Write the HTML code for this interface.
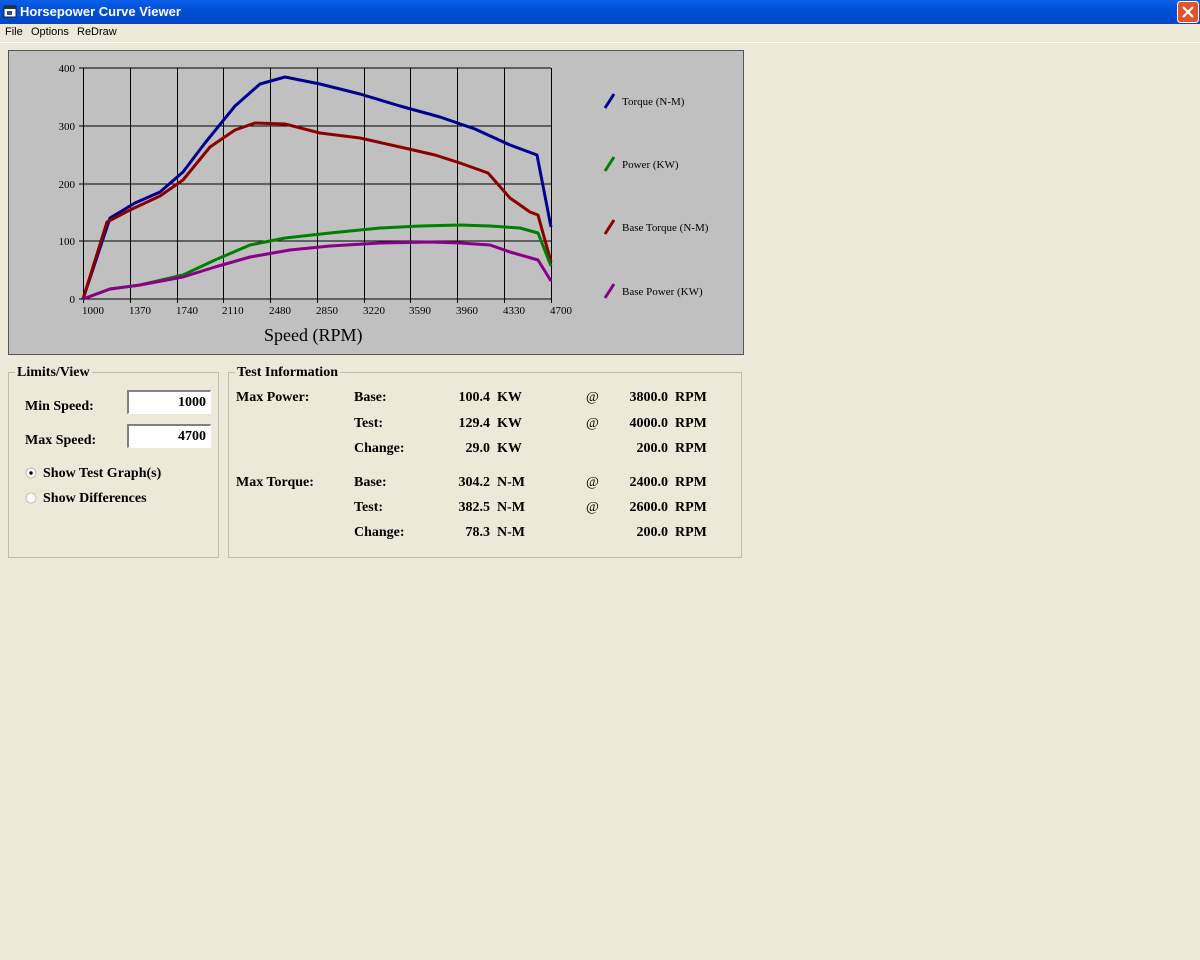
<!DOCTYPE html>
<html><head><meta charset="utf-8"><style>
body{margin:0;width:1200px;height:960px;background:#ece9d8;font-family:"Liberation Serif",serif;position:relative;overflow:hidden}
.tb{position:absolute;left:0;top:0;width:1200px;height:24px;background:linear-gradient(#0a5fe8,#0250d8 40%,#0346c8);}
.tb span{position:absolute;left:20px;top:4px;color:#fff;font:bold 13px "Liberation Sans",sans-serif}
.menu{position:absolute;top:26px;left:0;font:11px "Liberation Sans",sans-serif;color:#000}
.menu span{position:absolute;white-space:nowrap}
.t{position:absolute;font-size:14px;color:#000;white-space:nowrap}
.b{font-weight:bold}
fieldset{position:absolute;border:1px solid #c0bdb0;margin:0;padding:0}
.inp{position:absolute;background:#fff;border-top:2px solid #808080;border-left:2px solid #808080;border-bottom:1px solid #fff;border-right:1px solid #fff;font-size:14px;text-align:right;box-sizing:border-box;padding:3px 4px 0 0;font-weight:bold}
</style></head><body>
<div class="tb"><svg style="position:absolute;left:3px;top:5px" width="14" height="14"><rect x="1" y="1" width="12" height="11" fill="#fff" stroke="#123"/><rect x="1" y="1" width="12" height="3" fill="#234"/><rect x="4" y="6" width="5" height="4" fill="#357"/></svg><span>Horsepower Curve Viewer</span></div>
<svg style="position:absolute;left:1177px;top:1px" width="22" height="22"><rect x="0.5" y="0.5" width="21" height="21" rx="3" fill="#e0542c" stroke="#fff"/><path d="M6 6L16 16M16 6L6 16" stroke="#fff" stroke-width="2.2"/></svg>
<div class="menu"><span style="left:5px">File</span><span style="left:31px">Options</span><span style="left:77px">ReDraw</span></div>
<div style="position:absolute;left:0;top:42px;width:1200px;height:1px;background:#fff"></div>
<svg style="position:absolute;left:0;top:0" width="760" height="360" font-family="Liberation Serif,serif">
<rect x="8.5" y="50.5" width="735" height="304" fill="#c0c0c0" stroke="#555"/>
<g stroke="#000" stroke-width="1">
<line x1="83" y1="68" x2="551" y2="68"/><line x1="79" y1="126" x2="551" y2="126"/><line x1="79" y1="184" x2="551" y2="184"/><line x1="79" y1="241" x2="551" y2="241"/><line x1="79" y1="299" x2="551" y2="299"/><line x1="79" y1="68" x2="83" y2="68"/>
<line x1="83.5" y1="68" x2="83.5" y2="303"/><line x1="130.5" y1="68" x2="130.5" y2="303"/><line x1="177.5" y1="68" x2="177.5" y2="303"/><line x1="223.5" y1="68" x2="223.5" y2="303"/><line x1="270.5" y1="68" x2="270.5" y2="303"/><line x1="317.5" y1="68" x2="317.5" y2="303"/><line x1="364.5" y1="68" x2="364.5" y2="303"/><line x1="410.5" y1="68" x2="410.5" y2="303"/><line x1="457.5" y1="68" x2="457.5" y2="303"/><line x1="504.5" y1="68" x2="504.5" y2="303"/><line x1="551.5" y1="68" x2="551.5" y2="303"/>
</g>
<g font-size="11" text-anchor="end"><text x="75" y="72">400</text><text x="75" y="130">300</text><text x="75" y="188">200</text><text x="75" y="245">100</text><text x="75" y="303">0</text></g>
<g font-size="11"><text x="82" y="314">1000</text><text x="129" y="314">1370</text><text x="176" y="314">1740</text><text x="222" y="314">2110</text><text x="269" y="314">2480</text><text x="316" y="314">2850</text><text x="363" y="314">3220</text><text x="409" y="314">3590</text><text x="456" y="314">3960</text><text x="503" y="314">4330</text><text x="550" y="314">4700</text></g>
<text x="264" y="341" font-size="18">Speed (RPM)</text>
<g fill="none" stroke-width="3" stroke-linejoin="round">
<polyline stroke="#000090" points="83,299 110,218 135,203 160,192 183,172 205,143 235,106 260,84 285,77 320,84 360,94 400,106 440,117 475,129 510,145 537,155 551,227"/>
<polyline stroke="#8b0000" points="83,299 107,222 130,210 160,196 183,180 210,147 235,130 255,123 285,124 320,133 360,138 400,147 435,155 460,163 488,173 510,198 530,212 538,215 551,262"/>
<polyline stroke="#008000" points="83,299 110,289 140,285 183,275 215,260 250,245 285,238 330,233 380,228 420,226 460,225 490,226 520,228 538,233 551,266"/>
<polyline stroke="#8b008b" points="83,299 110,289 140,285 183,277 215,267 250,257 290,250 330,246 380,243 430,242 460,243 490,245 510,252 538,260 551,281"/>
</g>
<g stroke-width="3"><line x1="605" y1="108" x2="614" y2="94" stroke="#000090"/><line x1="605" y1="171" x2="614" y2="157" stroke="#008000"/><line x1="605" y1="234" x2="614" y2="220" stroke="#8b0000"/><line x1="605" y1="298" x2="614" y2="284" stroke="#8b008b"/></g>
<g font-size="11"><text x="622" y="105">Torque (N-M)</text><text x="622" y="168">Power (KW)</text><text x="622" y="231">Base Torque (N-M)</text><text x="622" y="295">Base Power (KW)</text></g>
</svg>
<fieldset style="left:8px;top:372px;width:209px;height:184px"></fieldset>
<div class="t b" style="left:15px;top:365px;background:#ece9d8;padding:0 2px">Limits/View</div>
<div class="t b" style="left:25px;top:399px">Min Speed:</div>
<div class="t b" style="left:25px;top:433px">Max Speed:</div>
<div class="inp" style="left:127px;top:390px;width:84px;height:24px">1000</div>
<div class="inp" style="left:127px;top:424px;width:84px;height:24px">4700</div>
<svg style="position:absolute;left:25px;top:467px" width="14" height="40"><circle cx="6" cy="6" r="5" fill="#fff" stroke="#b8b4a8" stroke-width="0.8"/><circle cx="6" cy="6" r="1.7" fill="#000"/><circle cx="6" cy="31" r="5" fill="#fff" stroke="#b8b4a8" stroke-width="0.8"/></svg>
<div class="t b" style="left:43px;top:466px">Show Test Graph(s)</div>
<div class="t b" style="left:43px;top:491px">Show Differences</div>
<fieldset style="left:228px;top:372px;width:512px;height:184px"></fieldset>
<div class="t b" style="left:235px;top:365px;background:#ece9d8;padding:0 2px">Test Information</div>
<div class="t b" style="left:236px;top:390px">Max Power:</div>
<div class="t b" style="left:236px;top:475px">Max Torque:</div>
<div class="t b" style="left:354px;top:390px">Base:</div><div class="t b" style="left:354px;top:416px">Test:</div><div class="t b" style="left:354px;top:441px">Change:</div>
<div class="t b" style="left:354px;top:475px">Base:</div><div class="t b" style="left:354px;top:500px">Test:</div><div class="t b" style="left:354px;top:525px">Change:</div>
<div class="t b" style="left:430px;top:390px;width:60px;text-align:right">100.4</div><div class="t b" style="left:497px;top:390px">KW</div>
<div class="t b" style="left:430px;top:416px;width:60px;text-align:right">129.4</div><div class="t b" style="left:497px;top:416px">KW</div>
<div class="t b" style="left:430px;top:441px;width:60px;text-align:right">29.0</div><div class="t b" style="left:497px;top:441px">KW</div>
<div class="t b" style="left:430px;top:475px;width:60px;text-align:right">304.2</div><div class="t b" style="left:497px;top:475px">N-M</div>
<div class="t b" style="left:430px;top:500px;width:60px;text-align:right">382.5</div><div class="t b" style="left:497px;top:500px">N-M</div>
<div class="t b" style="left:430px;top:525px;width:60px;text-align:right">78.3</div><div class="t b" style="left:497px;top:525px">N-M</div>
<div class="t" style="left:586px;top:390px">@</div><div class="t" style="left:586px;top:416px">@</div><div class="t" style="left:586px;top:475px">@</div><div class="t" style="left:586px;top:500px">@</div>
<div class="t b" style="left:600px;top:390px;width:68px;text-align:right">3800.0</div><div class="t b" style="left:675px;top:390px">RPM</div>
<div class="t b" style="left:600px;top:416px;width:68px;text-align:right">4000.0</div><div class="t b" style="left:675px;top:416px">RPM</div>
<div class="t b" style="left:600px;top:441px;width:68px;text-align:right">200.0</div><div class="t b" style="left:675px;top:441px">RPM</div>
<div class="t b" style="left:600px;top:475px;width:68px;text-align:right">2400.0</div><div class="t b" style="left:675px;top:475px">RPM</div>
<div class="t b" style="left:600px;top:500px;width:68px;text-align:right">2600.0</div><div class="t b" style="left:675px;top:500px">RPM</div>
<div class="t b" style="left:600px;top:525px;width:68px;text-align:right">200.0</div><div class="t b" style="left:675px;top:525px">RPM</div>
</body></html>
